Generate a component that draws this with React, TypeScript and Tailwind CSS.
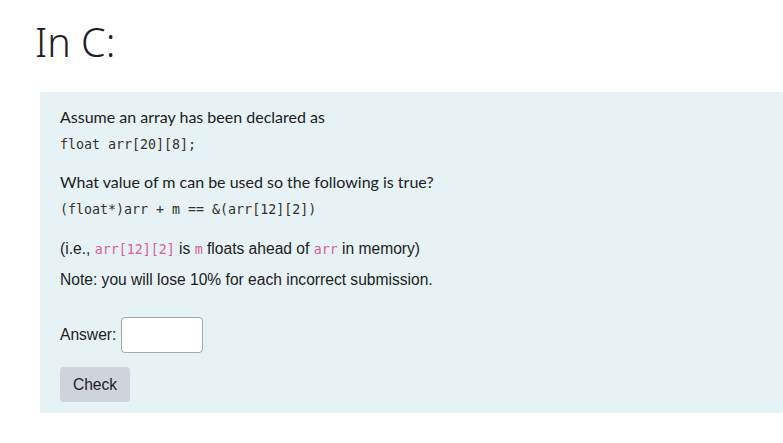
export default function App() {
  const mono = "font-['DejaVu_Sans_Mono',monospace] text-[13.3px]";
  const pink = `${mono} text-[#d9609b]`;
  return (
    <div className="min-h-screen bg-white pt-[16px] pl-[40px] font-['Lato','Noto_Sans',sans-serif] text-[#1d2125]">
      <h1 className="-ml-[5px] text-[39.5px] font-light leading-[52px] font-['Noto_Sans',sans-serif] text-[#1d2125]">
        In C:
      </h1>
      <div className="mt-[24px] h-[321px] rounded-[2px] bg-[#e6f2f3] px-[20px] pt-[14px]">
        <p className="text-[16px] leading-[22px]">Assume an array has been declared as</p>
        <p className={`${mono} mt-[6px] leading-[22px] text-[#333]`}>float arr[20][8];</p>
        <p className="mt-[15px] text-[16px] leading-[22px]">What value of m can be used so the following is true?</p>
        <p className={`${mono} mt-[6px] leading-[22px] text-[#333]`}>(float*)arr + m == &amp;(arr[12][2])</p>
        <div className="font-['Liberation_Sans',Arial,sans-serif] text-[15.6px]">
          <p className="mt-[17px] leading-[22px]">
            (i.e., <span className={pink}>arr[12][2]</span> is <span className={pink}>m</span> floats ahead of{" "}
            <span className={pink}>arr</span> in memory)
          </p>
          <p className="mt-[8px] leading-[22px]">Note: you will lose 10% for each incorrect submission.</p>
          <div className="mt-[26px] flex items-center gap-[5px]">
            <span>Answer:</span>
            <input
              type="text"
              className="h-[36px] w-[82px] rounded-[4px] border border-[#a3a8ae] bg-white px-2 outline-none"
            />
          </div>
          <button className="mt-[14px] h-[35px] w-[70px] rounded-[4px] bg-[#ced4da] text-[15.6px] text-[#1d2125]">
            Check
          </button>
        </div>
      </div>
    </div>
  );
}
